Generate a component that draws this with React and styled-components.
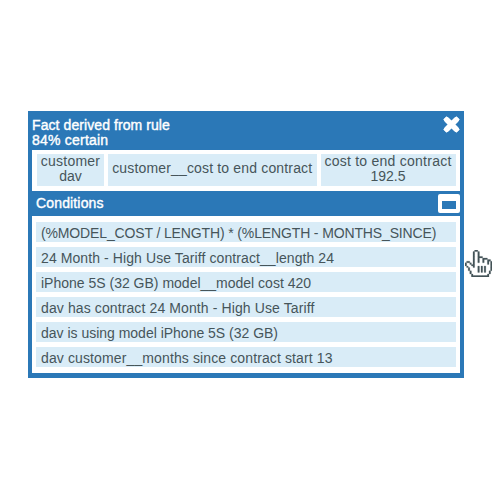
import React from "react";
import styled, { createGlobalStyle } from "styled-components";

const GlobalStyle = createGlobalStyle`
  * { box-sizing: border-box; }
  body { margin: 0; background: #fff; }
`;

const Page = styled.main`
  position: relative;
  width: 500px;
  height: 500px;
  padding: 111px 0 0 28px;
  overflow: hidden;
  background: #fff;
  color: #46555a;
  font: 14px/15px "Liberation Sans", Arial, sans-serif;
`;

const Panel = styled.section`
  display: flex;
  flex-direction: column;
  width: 436px;
  height: 267px;
  padding: 0 4px 5px;
  background: #2b78b7;
`;

const Header = styled.header`
  display: flex;
  justify-content: space-between;
  height: 39px;
  padding-top: 5px;
`;

const Title = styled.div`
  padding-top: 2px;
  color: #fff;
  -webkit-text-stroke: 0.4px #fff;
`;

const Line = styled.div`
  width: max-content;
  white-space: pre;
  letter-spacing: ${(p) => p.$spacing || 0}px;
`;

const CloseButton = styled.button`
  display: block;
  width: 17px;
  height: 17px;
  padding: 0;
  border: 0;
  background: none;
`;

const CloseIcon = styled.svg`
  display: block;
  width: 17px;
  height: 17px;
`;

const FactRow = styled.div`
  display: grid;
  grid-template-columns: 67px 208.5px 135px;
  gap: 4px;
  height: 40.5px;
  padding: 4px 5px 4.5px;
  background: #fff;
`;

const FactCell = styled.div`
  display: flex;
  flex-direction: column;
  align-items: center;
  justify-content: center;
  padding-bottom: ${(p) => (p.$single ? 4 : 2)}px;
  background: #d9ecf7;
`;

const ConditionsBar = styled.div`
  display: flex;
  align-items: center;
  justify-content: space-between;
  height: 25px;
  padding-left: 4px;
  color: #fff;
  -webkit-text-stroke: 0.4px #fff;
`;

const CollapseButton = styled.button`
  width: 22px;
  height: 19px;
  padding: 0;
  border: solid #fff;
  border-width: 7px 4px 4px;
  border-radius: 2px;
  background: #2b78b7;
`;

const ConditionList = styled.ul`
  display: flex;
  flex: 1;
  flex-direction: column;
  gap: 5px;
  margin: 0;
  padding: 6.5px 4px 0;
  background: #fff;
  list-style: none;
`;

const Condition = styled.li`
  height: 20px;
  padding: 4px 0 0 5px;
  background: #d9ecf7;
`;

const Cursor = styled.svg`
  position: absolute;
  left: 465px;
  top: 250px;
  width: 27.2px;
  height: 27.2px;
`;

const conditions = [
  ["(%MODEL_COST / LENGTH) * (%LENGTH - MONTHS_SINCE)", -0.135],
  ["24 Month - High Use Tariff contract__length 24", 0.09],
  ["iPhone 5S (32 GB) model__model cost 420", 0],
  ["dav has contract 24 Month - High Use Tariff", 0.11],
  ["dav is using model iPhone 5S (32 GB)", -0.01],
  ["dav customer__months since contract start 13", 0.12],
];

const handRows = [
  "......XX.........",
  ".....X..X........",
  ".....X..X........",
  ".....X..X........",
  ".....X..XXX......",
  ".....X..X..XXX...",
  ".....X..X..X..XX.",
  ".XX..X..X..X..X.X",
  "X..X.X........X.X",
  "X...XX..........X",
  ".X...X..X.X.X...X",
  "..X.....X.X.X...X",
  "..X.....X.X.X...X",
  "...X....X.X.X..X.",
  "...X...........X.",
  "....X.........X..",
  "....XXXXXXXXXXX..",
];

const handPath = handRows
  .flatMap((row, y) =>
    [...row].map((cell, x) => (cell === "X" ? `M${x} ${y}h1v1h-1z` : ""))
  )
  .join("");

function HandCursor() {
  return (
    <Cursor viewBox="0 0 17 17">
      <path d="M6 0h2l1 4 5 2 3 1v6l-2 3H5l-4-6-1-2 3-1 2 2V1z" fill="#fff" />
      <path d={handPath} fill="#46555a" stroke="#46555a" strokeWidth="0.15" />
    </Cursor>
  );
}

export default function App() {
  return (
    <Page>
      <GlobalStyle />
      <Panel>
        <Header>
          <Title>
            <Line $spacing={0.08}>Fact derived from rule</Line>
            <Line $spacing={0.22}>84% certain</Line>
          </Title>
          <CloseButton aria-label="Close">
            <CloseIcon viewBox="0 0 17 17">
              <path d="M3.600 3.600 13.400 13.400M13.400 3.600 3.600 13.400" stroke="#fff" strokeWidth="4.800" strokeLinecap="square" />
              <path d="M4 4 13 13M13 4 4 13" stroke="#fff" strokeWidth="5.600" strokeLinecap="round" />
            </CloseIcon>
          </CloseButton>
        </Header>
        <FactRow>
          <FactCell>
            <Line $spacing={0.25}>customer</Line>
            <Line>dav</Line>
          </FactCell>
          <FactCell $single>
            <Line $spacing={0.16}>customer__cost to end contract</Line>
          </FactCell>
          <FactCell>
            <Line $spacing={0.25}>cost to end contract</Line>
            <Line>192.5</Line>
          </FactCell>
        </FactRow>
        <ConditionsBar>
          <Line $spacing={0.15}>Conditions</Line>
          <CollapseButton aria-label="Collapse" />
        </ConditionsBar>
        <ConditionList>
          {conditions.map(([text, spacing]) => (
            <Condition key={text}>
              <Line $spacing={spacing}>{text}</Line>
            </Condition>
          ))}
        </ConditionList>
      </Panel>
      <HandCursor />
    </Page>
  );
}
